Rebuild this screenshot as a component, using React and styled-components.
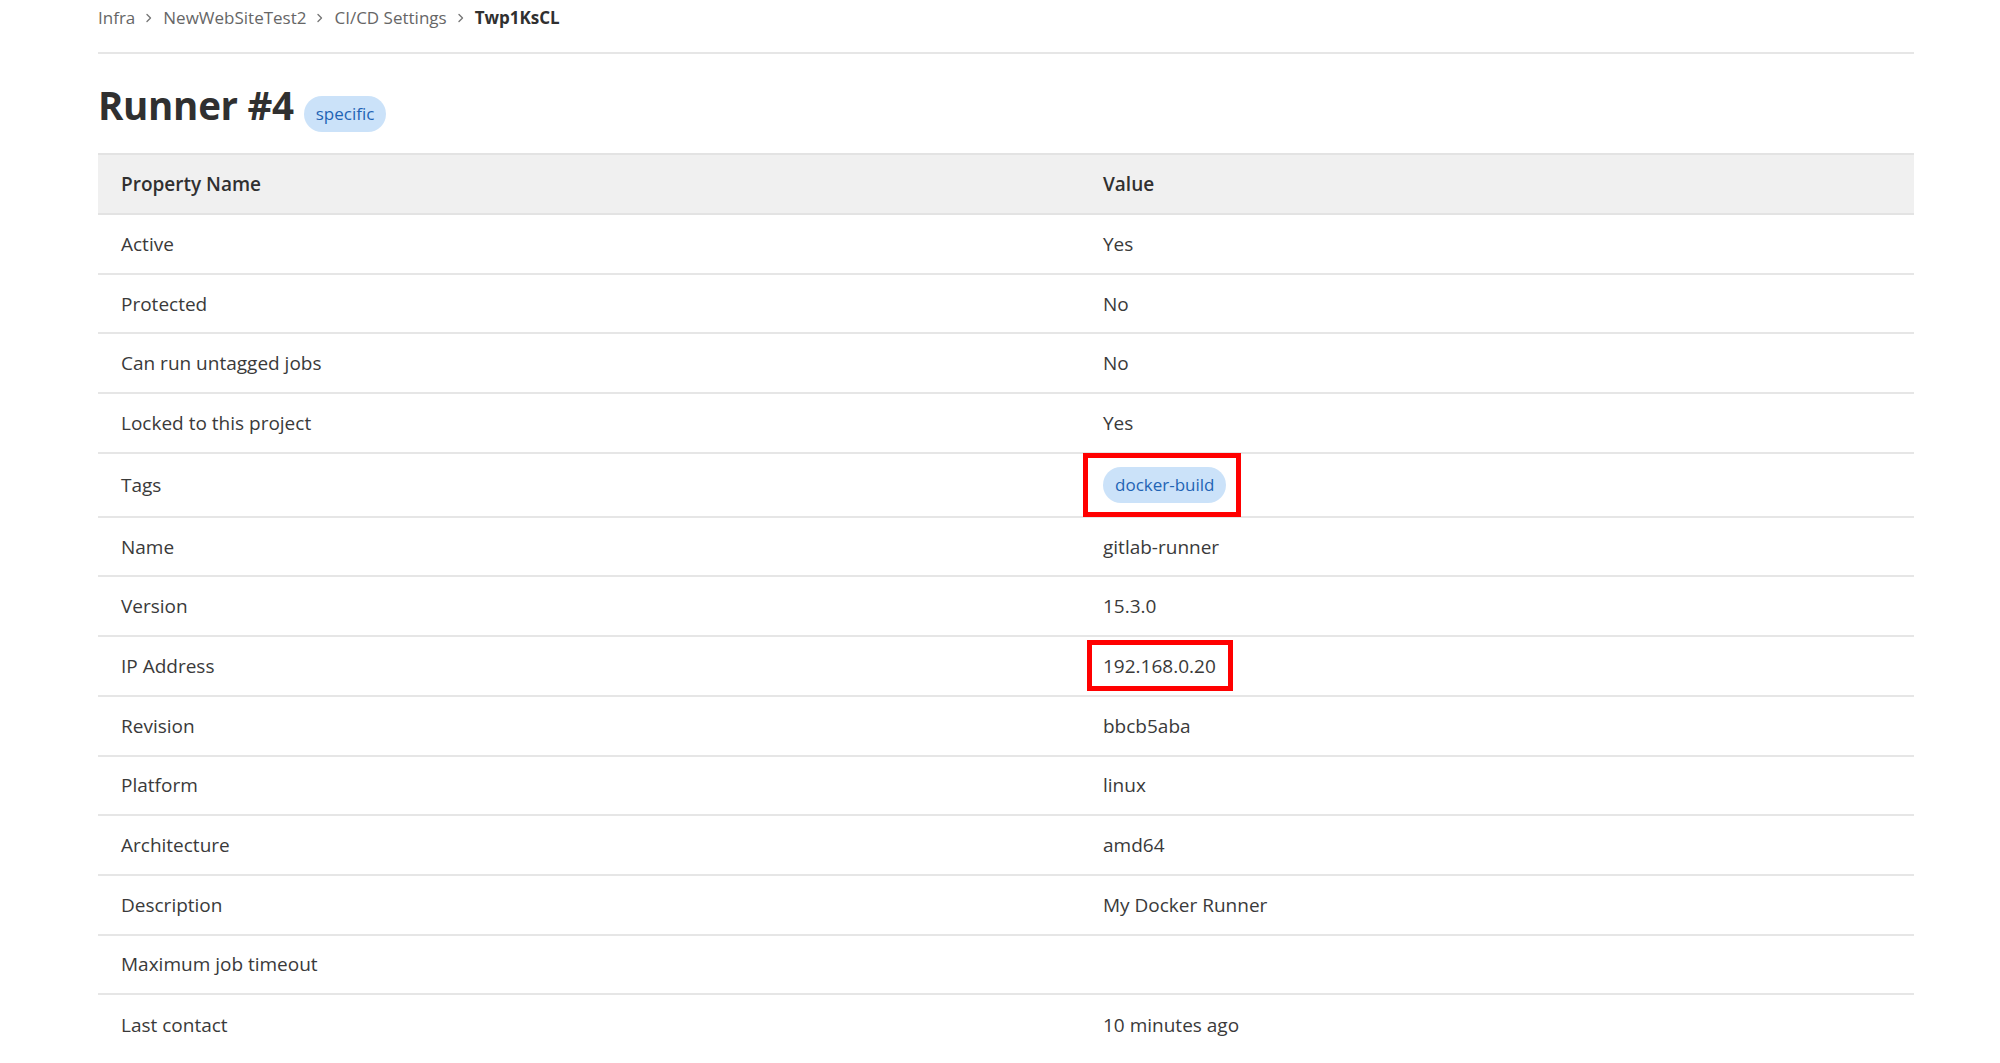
import styled, { createGlobalStyle } from "styled-components";

const GlobalStyle = createGlobalStyle`
  body {
    margin: 0;
    background: #fff;
    font-family: "Open Sans", "Noto Sans", sans-serif;
    color: #3a3a3a;
  }
`;

const Page = styled.div`
  width: 1816px;
  padding-left: 98px;
  box-sizing: content-box;
`;

const Breadcrumbs = styled.nav`
  display: flex;
  align-items: center;
  gap: 10px;
  height: 54px;
  box-sizing: border-box;
  padding-bottom: 16px;
  border-bottom: 2px solid #e6e6e6;
  font-size: 17px;
  line-height: 24px;
`;

const Crumb = styled.span`
  color: ${(props) => (props.current ? "#303030" : "#666")};
  font-weight: ${(props) => (props.current ? 700 : 400)};
`;

const Chevron = () => (
  <svg width="8" height="12" viewBox="0 0 8 12" aria-hidden="true">
    <path d="M2 2.5 5.5 6 2 9.5" fill="none" stroke="#777" strokeWidth="1.4" strokeLinecap="round" strokeLinejoin="round" />
  </svg>
);

const TitleRow = styled.div`
  display: flex;
  align-items: baseline;
  gap: 10px;
  margin: 26px 0 21px;
`;

const Title = styled.h1`
  margin: 0;
  font-size: 38.5px;
  line-height: 50px;
  font-weight: 700;
  color: #303030;
  letter-spacing: -0.3px;
`;

const Badge = styled.span`
  display: inline-flex;
  align-items: center;
  height: 36px;
  padding: 0 12px;
  border-radius: 18px;
  background: #cbe2f9;
  color: #1f64b5;
  font-size: 17px;
  line-height: 36px;
`;

const Table = styled.div`
  display: flex;
  flex-direction: column;
`;

const Row = styled.div`
  display: grid;
  grid-template-columns: 982px 1fr;
  align-items: center;
  height: ${(props) => (props.tall ? 64 : 59.7)}px;
  box-sizing: border-box;
  border-bottom: 2px solid #e6e6e6;
  font-size: 19px;
  line-height: 26px;

  &:last-child {
    border-bottom: none;
  }
`;

const HeadRow = styled(Row)`
  height: 62px;
  background: #f0f0f0;
  border-top: 2px solid #e3e3e3;
  border-bottom: 2px solid #e3e3e3;
  font-weight: 600;
  color: #303030;
`;

const Cell = styled.div`
  padding-left: 23px;
  display: flex;
  align-items: center;
`;

/* red annotation frame drawn over a value */
const Mark = styled.span`
  position: relative;
  display: inline-flex;

  &::after {
    content: "";
    position: absolute;
    top: ${(props) => props.t}px;
    bottom: ${(props) => props.b}px;
    left: ${(props) => props.l}px;
    right: ${(props) => props.r}px;
    border: 5px solid #f00;
    pointer-events: none;
  }
`;

const rows = [
  ["Active", "Yes"],
  ["Protected", "No"],
  ["Can run untagged jobs", "No"],
  ["Locked to this project", "Yes"],
  ["Tags", "tag"],
  ["Name", "gitlab-runner"],
  ["Version", "15.3.0"],
  ["IP Address", "ip"],
  ["Revision", "bbcb5aba"],
  ["Platform", "linux"],
  ["Architecture", "amd64"],
  ["Description", "My Docker Runner"],
  ["Maximum job timeout", ""],
  ["Last contact", "10 minutes ago"],
];

const renderValue = (value) => {
  if (value === "tag") {
    return (
      <Mark t={-14} b={-14} l={-20} r={-15}>
        <Badge>docker-build</Badge>
      </Mark>
    );
  }
  if (value === "ip") {
    return (
      <Mark t={-13} b={-12} l={-16} r={-17}>
        192.168.0.20
      </Mark>
    );
  }
  return value;
};

export default function App() {
  return (
    <Page>
      <GlobalStyle />
      <Breadcrumbs>
        <Crumb>Infra</Crumb>
        <Chevron />
        <Crumb>NewWebSiteTest2</Crumb>
        <Chevron />
        <Crumb>CI/CD Settings</Crumb>
        <Chevron />
        <Crumb current>Twp1KsCL</Crumb>
      </Breadcrumbs>

      <TitleRow>
        <Title>Runner #4</Title>
        <Badge>specific</Badge>
      </TitleRow>

      <Table>
        <HeadRow>
          <Cell>Property Name</Cell>
          <Cell>Value</Cell>
        </HeadRow>
        {rows.map(([name, value]) => (
          <Row key={name} tall={value === "tag"}>
            <Cell>{name}</Cell>
            <Cell>{renderValue(value)}</Cell>
          </Row>
        ))}
      </Table>
    </Page>
  );
}
